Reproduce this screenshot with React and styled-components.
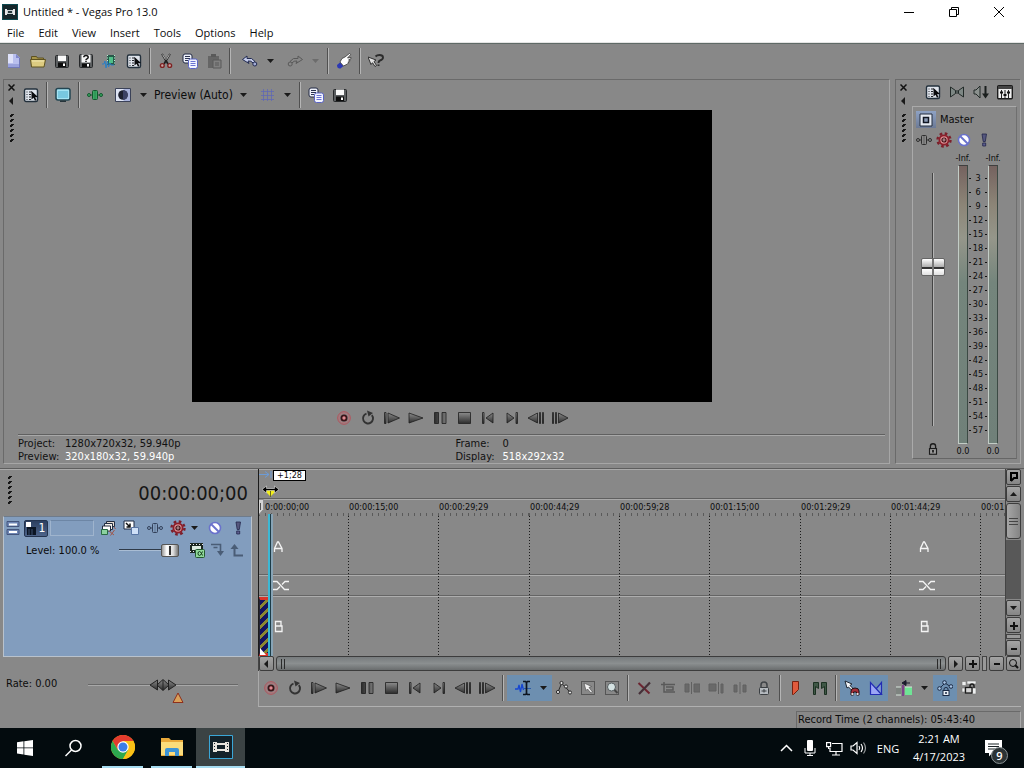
import { useState } from "react";
import styled, { createGlobalStyle, css } from "styled-components";

const UI_FONT = `"DejaVu Sans Condensed", "Noto Sans", sans-serif`;
const SYSTEM_FONT = `"Open Sans", "Noto Sans", sans-serif`;

const GlobalStyle = createGlobalStyle`
  * {
    box-sizing: border-box;
  }
  body {
    margin: 0;
    background: #888888;
    color: #0c0c0c;
    font-family: ${UI_FONT};
    font-size: 11px;
    line-height: 13px;
    overflow: hidden;
  }
  button, select, input {
    margin: 0;
    padding: 0;
    border: 0;
    background: none;
    color: inherit;
    font: inherit;
  }
  svg {
    display: block;
    flex: none;
  }
`;

const Page = styled.div`
  display: flex;
  flex-direction: column;
  min-height: 100vh;
`;

/* ---------- window frame ---------- */

const TitleBar = styled.header`
  display: flex;
  align-items: center;
  height: 23px;
  padding: 0 3px 0 2px;
  background: #fff;
  font-family: ${SYSTEM_FONT};
`;

const Title = styled.h1`
  flex: 1;
  margin: 0 0 0 5px;
  font-size: 11px;
  font-weight: 400;
  line-height: 16px;
`;

const WindowButton = styled.button`
  display: flex;
  align-items: center;
  justify-content: center;
  width: 45px;
  height: 22px;
`;

const MenuBar = styled.nav`
  display: flex;
  height: 20px;
  background: #fff;
  border-bottom: 1px solid #e4e4e4;
`;

const MenuItem = styled.button`
  padding: 0 7px;
  font-family: ${SYSTEM_FONT};
  font-size: 11px;
  line-height: 18px;
`;

/* ---------- toolbars ---------- */

const Bar = styled.div`
  display: flex;
  align-items: center;
`;

const MainToolbar = styled(Bar)`
  height: 36px;
  padding: 0 0 2px 2px;
  border-top: 1px solid #5f6a66;
`;

const Tool = styled.button`
  display: flex;
  align-items: center;
  justify-content: center;
  width: ${(p) => (p.$caret ? 17 : p.$small ? 20 : 24)}px;
  height: ${(p) => (p.$small ? 18 : 26)}px;
  opacity: ${(p) => (p.$dim ? 0.45 : 1)};
  background: ${(p) => (p.$on ? "#6d8fb0" : "none")};
`;

const DropTool = styled.div`
  display: flex;
  margin-left: ${(p) => (p.$on ? 0 : 4)}px;
  padding-left: ${(p) => (p.$on ? 4 : 0)}px;
  background: ${(p) => (p.$on ? "#6d8fb0" : "none")};
`;

const Separator = styled.div`
  width: 2px;
  height: 26px;
  margin: 0 3px;
  border-left: 1px solid #505050;
  border-right: 1px solid #b5b5b5;
`;

/* ---------- upper dock ---------- */

const Dock = styled.main`
  display: flex;
  flex: 1;
  gap: 5px;
  padding: 0 3px;
`;

const Panel = styled.section`
  display: flex;
  border: 1px solid #a6a6a6;
  border-top-color: #6a6a6a;
  border-left-color: #6a6a6a;
`;

const PreviewPanel = styled(Panel)`
  flex: 1;
`;

const MasterPanel = styled(Panel)`
  width: 126px;
`;

const GripColumn = styled.div`
  display: flex;
  flex-direction: column;
  align-items: center;
  width: 15px;
  padding-top: 1px;
`;

const GripButton = styled.button`
  display: flex;
  align-items: center;
  justify-content: center;
  width: 12px;
  height: 13px;
`;

const GripSpace = styled.span`
  height: 6px;
`;

const PreviewBody = styled.div`
  display: flex;
  flex: 1;
  flex-direction: column;
  padding-right: 4px;
`;

const PreviewToolbar = styled(Bar)`
  height: 30px;
`;

const SelectBox = styled.label`
  display: grid;
  align-items: center;
  width: 103px;
`;

const Select = styled.select`
  grid-area: 1 / 1;
  width: 100%;
  padding-left: 2px;
  appearance: none;
  font-size: 12px;
  line-height: 18px;
`;

const SelectCaret = styled.span`
  grid-area: 1 / 1;
  justify-self: end;
  padding-right: 7px;
  pointer-events: none;
`;

const VideoArea = styled.div`
  display: flex;
  flex: 1;
  justify-content: center;
`;

const Video = styled.div`
  aspect-ratio: 16 / 9;
  background: #000;
`;

const Transport = styled(Bar)`
  justify-content: center;
  height: 32px;
`;

const Readout = styled.div`
  display: grid;
  grid-template-columns: 1fr 1fr;
  column-gap: 8px;
  margin-left: -1px;
  padding-top: 2px;
  border-top: 1px solid #606060;
  box-shadow: inset 0 1px 0 #a8a8a8;
`;

const ReadoutList = styled.dl`
  display: grid;
  grid-template-columns: 47px 1fr;
  margin: 0;
`;

const Key = styled.dt`
  color: #111;
`;

const Value = styled.dd`
  margin: 0;
  color: ${(p) => (p.$light ? "#fff" : "#111")};
`;

/* ---------- master bus ---------- */

const MasterBody = styled.div`
  display: flex;
  flex: 1;
  flex-direction: column;
  padding: 0 3px 4px 0;
`;

const MasterTools = styled(Bar)`
  justify-content: flex-end;
  height: 26px;
  padding-bottom: 2px;
`;

const Strip = styled.div`
  display: flex;
  flex: 1;
  flex-direction: column;
  margin-left: 1px;
  padding: 3px 3px 0;
  border: 1px solid #aaaaaa;
  border-bottom-color: #666;
  border-right-color: #6f6f6f;
`;

const StripName = styled.div`
  display: flex;
  align-items: center;
  gap: 4px;
  height: 19px;
`;

const StripButton = styled.button`
  display: flex;
  align-items: center;
  justify-content: center;
  width: 20px;
  height: 17px;
  background: linear-gradient(#8ea2c4, #6c7a96);
`;

const StripTools = styled.div`
  display: flex;
  align-items: center;
  height: 22px;
  margin-left: -2px;
`;

const Mixer = styled.div`
  display: grid;
  flex: 1;
  grid-template-columns: 34px 1fr;
`;

const FaderColumn = styled.div`
  display: flex;
  flex-direction: column;
  align-items: center;
  padding: 22px 0 2px;
`;

const Fader = styled.input`
  flex: 1;
  width: 24px;
  height: 100px;
  margin-bottom: 16px;
  appearance: none;
  writing-mode: vertical-lr;
  direction: rtl;
  background: linear-gradient(90deg, #444 1px, #b4b4b4 1px) center / 2px 100% no-repeat;

  &::-webkit-slider-thumb {
    appearance: none;
    width: 24px;
    height: 18px;
    border: 1px solid #666;
    border-radius: 2px;
    background:
      linear-gradient(#777, #777) center / 2px 100% no-repeat,
      linear-gradient(#fff, #b0b0b0 48%, #333 50%, #333 60%, #fff 62%, #e0e0e0);
  }
`;

const Meters = styled.div`
  display: grid;
  grid-template-columns: 10px 20px 10px;
  grid-template-rows: 14px 1fr 14px;
  justify-items: center;
  justify-content: start;
  padding-left: 8px;
  font-size: 9px;
  line-height: 14px;
  white-space: nowrap;
`;

const Meter = styled.div`
  width: 10px;
  border: 1px solid #c2ccc6;
  border-right-color: #3c4a44;
  border-top-color: #3f3f3f;
  background: linear-gradient(#75625f, #8c8577 14%, #95968a 26%, #74857c 42%, #708079);
`;

const Scale = styled.ol`
  display: flex;
  flex-direction: column;
  justify-content: space-between;
  margin: 0;
  padding: 6px 0 7px;
  list-style: none;
  text-align: center;
`;

const ScaleMark = styled.li`
  display: flex;
  align-items: center;
  justify-content: space-between;
  width: 18px;

  &::before,
  &::after {
    content: "";
    width: 2px;
    height: 1px;
    background: #111;
  }
`;

/* ---------- timeline ---------- */

const Timeline = styled.section`
  display: grid;
  grid-template-columns: 258px minmax(0, 1fr);
  margin-top: 4px;
  padding-right: 3px;
  border-top: 1px solid #5e5e5e;
`;

const TrackSide = styled.div`
  display: flex;
  flex-direction: column;
  border-top: 1px solid #aaaaaa;
`;

const TimeBox = styled.div`
  display: flex;
  align-items: flex-start;
  justify-content: space-between;
  height: 46px;
  padding: 5px 10px 0 7px;
`;

const TimeDisplay = styled.output`
  padding-top: 5px;
  font-size: 20px;
  line-height: 26px;
  color: #161616;
`;

const TrackHeader = styled.div`
  height: 141px;
  margin: 0 6px 0 3px;
  padding: 1px;
  border: 1px solid #b9c2cc;
  border-top-color: #6e7b8b;
  background: #829dbe;
`;

const TrackRow = styled.div`
  display: flex;
  align-items: center;
  height: 20px;
`;

const TrackName = styled.input`
  width: 44px;
  height: 16px;
  margin: 0 2px;
  border: 1px solid #9fb4cd;
  border-top-color: #6d86a5;
`;

const TrackNumber = styled.button`
  display: flex;
  align-items: center;
  justify-content: space-between;
  width: 25px;
  height: 17px;
  margin-left: 3px;
  padding: 0 2px 0 1px;
  border: 1px solid #24344f;
  border-radius: 2px;
  background: linear-gradient(#2c3f60, #4d648a);
  color: #fff;
  font-size: 12px;
`;

const LevelRow = styled(TrackRow)`
  height: 24px;
  padding-left: 21px;
`;

const LevelLabel = styled.label`
  display: flex;
  align-items: center;
  gap: 20px;
  margin-right: 8px;
  white-space: nowrap;
`;

const LevelSlider = styled.input`
  width: 60px;
  height: 16px;
  appearance: none;
  background: linear-gradient(#2f3a48 1px, #a9bdd4 1px) center / 100% 2px no-repeat;

  &::-webkit-slider-thumb {
    appearance: none;
    width: 18px;
    height: 13px;
    border: 1px solid #555;
    border-radius: 2px;
    background:
      linear-gradient(#333, #333) center / 2px 9px no-repeat,
      linear-gradient(90deg, #999, #fff 30%, #ddd 70%, #777);
  }
`;

const RateRow = styled.div`
  display: flex;
  align-items: flex-start;
  justify-content: space-between;
  padding: 20px 20px 0 6px;
`;

const RateControl = styled.span`
  display: grid;
  justify-items: center;
  align-items: center;
  width: 150px;
`;

const RateSlider = styled.input`
  grid-area: 1 / 1;
  width: 100%;
  height: 15px;
  appearance: none;
  background: linear-gradient(#686868 1px, #a8a8a8 1px) center / 100% 2px no-repeat;

  &::-webkit-slider-thumb {
    appearance: none;
    width: 28px;
    height: 14px;
    background: none;
  }
`;

const RateThumb = styled.span`
  grid-area: 1 / 1;
  pointer-events: none;
`;

const RatePeak = styled.span`
  padding-left: 30px;
`;

const ArrangeSide = styled.div`
  display: grid;
  grid-template-columns: minmax(0, 1fr) 16px;
`;

const Arrange = styled.div`
  display: flex;
  flex-direction: column;
  border-left: 1px solid #1b1b1b;
  overflow: hidden;
`;

const MarkerBar = styled.div`
  position: relative;
  height: 30px;
  border-top: 1px solid #aaa;
  border-bottom: 1px solid #5f5f5f;
`;

const DragTip = styled.span`
  position: absolute;
  top: 0;
  left: 14px;
  padding: 0 3px;
  border: 1px solid #000;
  background: #fff;
  font-size: 9px;
  line-height: 9px;
`;

const LoopArrow = styled.span`
  position: absolute;
  top: 0;
  left: 0;
`;

const DragCursor = styled.span`
  position: absolute;
  top: 15px;
  left: 3px;
`;

const beatWidths = css`
  flex: none;
  width: 90px;

  &:nth-of-type(3n) {
    width: 91px;
  }
`;

const Ruler = styled.div`
  position: relative;
  display: flex;
  height: 17px;
  border-top: 1px solid #aaa;
`;

const RulerMark = styled.span`
  ${beatWidths}
  padding-left: 1px;
  font-size: 9px;
  line-height: 15px;
  background: repeating-linear-gradient(90deg, #5a5a5a 0 1px, transparent 1px 6px) left bottom / 100% 3px no-repeat;

  &:first-of-type {
    width: 89px;
    padding-left: 6px;
  }
`;

const StartFlag = styled.div`
  position: absolute;
  top: -1px;
  left: -1px;
`;

const Lanes = styled.div`
  position: relative;
`;

const Lane = styled.div`
  display: flex;
  height: ${(p) => p.$height}px;
  border-bottom: 1px solid #adadad;
  box-shadow: inset 0 -1px 0 #656565;
`;

const LastLane = styled(Lane)`
  border-bottom: 0;
  box-shadow: none;
`;

const Beat = styled.span`
  ${beatWidths}
  background: repeating-linear-gradient(#1a1a1a 0 1px, transparent 1px 3px) right top / 1px 100% no-repeat;
`;

const LaneMark = styled.span`
  position: absolute;
  left: ${(p) => p.$left}px;
  top: ${(p) => p.$top}px;
`;

const Clip = styled.div`
  position: absolute;
  left: 0;
  bottom: 0;
  width: 11px;
  height: 59px;
  border: 1px solid #223;
  border-top: 3px solid #d8342a;
  border-bottom: 3px solid #d8342a;
  background: repeating-linear-gradient(135deg, #14145e 0 4px, #8a8730 4px 7px);
`;

const ClipFade = styled.div`
  position: absolute;
  left: 1px;
  bottom: 1px;
`;

const Playhead = styled.div`
  position: absolute;
  top: -2px;
  bottom: 0;
  left: 9px;
  width: 5px;
  border-right: 2px solid #88a4b6;
  background: linear-gradient(90deg, #3cb8d4 2px, #1d3c48 2px);
`;

const ScrollColumn = styled.div`
  display: flex;
  flex-direction: column;
  gap: 1px;
  border-left: 1px solid #444;
`;

const ScrollButton = styled.button`
  display: flex;
  align-items: center;
  justify-content: center;
  width: 15px;
  height: ${(p) => (p.$row ? 15 : 16)}px;
  border: 1px solid #3c3c3c;
  border-radius: 2px;
  background: linear-gradient(#a4a4a4, #858585);
`;

const Trough = styled.div`
  flex: 1;
  background: #585858;
`;

const ScrollThumb = styled.div`
  display: flex;
  align-items: center;
  justify-content: center;
  height: 36px;
  border: 1px solid #3c3c3c;
  border-radius: 3px;
  background: linear-gradient(90deg, #a6a6a6, #848484);
`;

const ZoomSlot = styled.div`
  width: ${(p) => (p.$row ? 5 : 15)}px;
  height: ${(p) => (p.$row ? 15 : 5)}px;
  border: 1px solid #444;
  background: #999;
`;

const ScrollRow = styled.div`
  display: flex;
  grid-column: 1 / -1;
  gap: 2px;
  height: 15px;
  border-left: 1px solid #444;
`;

const WideThumb = styled.div`
  display: flex;
  flex: 1;
  align-items: center;
  justify-content: space-between;
  padding: 0 3px;
  border: 1px solid #3c3c3c;
  border-radius: 3px;
  background: linear-gradient(#777b7d, #8b8f90 50%, #6a6d6e);
`;

const EditBar = styled(Bar)`
  grid-column: 1 / -1;
  height: 36px;
  padding-bottom: 1px;
  border-left: 1px solid #aaa;
  border-bottom: 1px solid #b0b0b0;
`;

const Gap = styled.span`
  width: 5px;
`;

const StatusBar = styled.footer`
  display: flex;
  justify-content: flex-end;
  height: 21px;
  padding: 4px 3px 0 0;
`;

const StatusCell = styled.div`
  width: 225px;
  padding-left: 1px;
  border: 1px solid #6a6a6a;
  border-right-color: #aaa;
  border-bottom: 0;
  line-height: 15px;
`;

/* ---------- taskbar ---------- */

const Taskbar = styled.footer`
  display: flex;
  height: 40px;
  background: #030b0e;
  color: #fff;
  font-family: ${SYSTEM_FONT};
  font-size: 11px;
`;

const TaskButton = styled.button`
  display: flex;
  flex-direction: column;
  align-items: center;
  justify-content: center;
  width: 49px;
  background: ${(p) => (p.$active ? "#3b4344" : "none")};
`;

const TaskUnderline = styled.span`
  align-self: stretch;
  height: 2px;
  margin: ${(p) => (p.$full ? "0" : "0 4px")};
  background: #a6dcf0;
`;

const TaskIcon = styled.span`
  display: flex;
  flex: 1;
  align-items: center;
`;

const Tray = styled.div`
  display: flex;
  align-items: center;
  margin-left: auto;
`;

const TrayButton = styled.button`
  display: flex;
  align-items: center;
  justify-content: center;
  width: 24px;
  height: 40px;
`;

const Language = styled.button`
  width: 36px;
  height: 40px;
`;

const Clock = styled.button`
  width: 66px;
  height: 40px;
  line-height: 18px;
  text-align: center;
`;

const ActionCenter = styled.button`
  position: relative;
  display: flex;
  justify-content: center;
  align-items: center;
  width: 44px;
  height: 40px;
  margin-right: 8px;
`;

const Badge = styled.span`
  position: absolute;
  right: 8px;
  bottom: 4px;
  width: 17px;
  height: 17px;
  border: 1px solid #8a9294;
  border-radius: 50%;
  background: #2b3335;
  font-size: 11px;
  font-weight: 600;
  line-height: 15px;
`;

/* ---------- drawings ---------- */

const FloppyShape = () => (
  <>
    <rect x="1.500" y="2.500" width="13" height="12" rx="1" fill="#5b5e60" stroke="#26282a" />
    <path d="M4 2.500h8V8H4z" fill="#fafafa" />
    <path d="M4 9.500h8V14H4z" fill="#0c0c0c" />
    <path d="M9 10.500h2V13H9z" fill="#fff" />
  </>
);

const EventFxShape = ({ fill = "#888", line = "#2e2e2e" }) => (
  <g stroke={line} fill={fill}>
    <path d="M3 8h10" />
    <circle cx="2" cy="8" r="1.500" />
    <circle cx="14" cy="8" r="1.500" />
    <rect x="5.500" y="3.500" width="5" height="9" rx="1" />
    <path d="M8 4v8" opacity=".4" />
  </g>
);

const GearShape = () => (
  <>
    <circle cx="8" cy="8" r="6.500" fill="none" stroke="#7c1f2a" strokeWidth="2.400" strokeDasharray="2.600 2.500" />
    <circle cx="8" cy="8" r="4.600" fill="#dc8f94" stroke="#8c1f2b" strokeWidth="1.800" />
    <circle cx="8" cy="8" r="2" fill="#f6d6d6" stroke="#3a0a10" strokeWidth="1.200" />
    <circle cx="8" cy="8" r=".8" fill="#3a0a10" />
  </>
);

const CopyShape = () => (
  <>
    <rect x="1" y="1" width="9" height="9" rx="2" fill="#eef1fa" stroke="#222a44" />
    <path d="M3 3.500h5M3 5.500h5M3 7.500h3" stroke="#2b3350" />
    <rect x="6.500" y="6" width="9" height="9.500" rx="2" fill="#f3f5ff" stroke="#5a64c4" />
    <path d="M8.500 8.500h5M8.500 10.500h5M8.500 12.500h5" stroke="#6a74d4" />
  </>
);

const shapes = {
  vegas: (
    <>
      <path d="M0 0h16v16H0z" fill="#0d4a50" />
      <path d="M1 1h14v14H1z" fill="#16272b" />
      <path d="M3 5h2v6H3zM11 5h2v6h-2z" fill="#e8e8e8" />
      <path d="M5 6h6v4H5z" fill="#c9d2d4" />
      <path d="M6 7h4v2H6z" fill="#26383b" />
    </>
  ),
  newFile: (
    <>
      <path d="M2 1h8l4 4v10H2z" fill="#b9bfee" />
      <path d="M2 1h5v9H2z" fill="#dfe2fa" />
      <path d="M10 1v4h4z" fill="#8188cc" />
      <path d="M2 11h12v4H2z" fill="#9aa2dc" />
      <path d="M13.500 5v10M2 14.500h12" stroke="#7279b8" />
    </>
  ),
  open: (
    <>
      <path d="M1.500 13.500v-10h5l1 1.500h6v2.500" fill="#a8964a" stroke="#5e5220" />
      <path d="M.5 6.500h15l-1.500 7.500H1.500z" fill="#dccb80" stroke="#5e5220" />
      <path d="M2 8h12" stroke="#f0e6b0" />
    </>
  ),
  save: <FloppyShape />,
  saveAs: (
    <>
      <rect x="1.500" y="1.500" width="13" height="13" rx="1" fill="#5b5e60" stroke="#26282a" />
      <path d="M3.500 1.500h9v8h-9z" fill="#f6f6f6" />
      <path d="M5.800 4.300q0-1.800 2.200-1.800t2.200 1.800q0 1-1.200 1.600-1 .5-1 1.200M8 7.800v1.200" fill="none" stroke="#111" strokeWidth="1.500" />
      <path d="M4 10.500h8V14H4z" fill="#0c0c0c" />
      <path d="M9 11h2v2.500H9z" fill="#fff" />
    </>
  ),
  render: (
    <>
      <path d="M5 2h8v10H5z" fill="#27594a" />
      <path d="M7 4h4v6H7z" fill="#4fc088" />
      <path d="M5.500 2v9M12.500 2v10" stroke="#b8ecd0" strokeDasharray="1 1.500" />
      <path d="M0 11h2l1-3 1 7 1.500-7 1 6 1.500-4 1 2h3" fill="none" stroke="#2c7fc4" />
    </>
  ),
  props: (
    <>
      <rect x="1.500" y="2" width="13" height="12.500" rx="1.500" fill="#dfe4ec" stroke="#23303c" strokeWidth="1.400" />
      <path d="M3.500 5h1M3.500 7.500h1M3.500 10h1M3.500 12.500h1M6 5h3M6 7.500h2M6 10h2M6 12.500h2" stroke="#23252b" />
      <path d="M8.500 4v8.500l2-1.700 1.500 3 1.500-.8-1.400-2.700 2.900-.3z" fill="#0a0b0e" />
    </>
  ),
  cut: (
    <>
      <path d="M4 1l6 10M12 1L6 11" stroke="#202020" strokeWidth="1.800" />
      <path d="M4.500 1.500l3 5M11.500 1.500l-3 5" stroke="#e4e4e4" strokeWidth=".8" />
      <circle cx="4.300" cy="12.500" r="1.900" fill="#c9a6a6" stroke="#7d2222" strokeWidth="1.400" />
      <circle cx="11.700" cy="12.500" r="1.900" fill="#c9a6a6" stroke="#7d2222" strokeWidth="1.400" />
    </>
  ),
  copy: <CopyShape />,
  paste: (
    <>
      <path d="M2 3h11v12H2z" fill="#3c3c3c" />
      <path d="M5 1h5v3H5z" fill="#222" />
      <path d="M7 7h8v8H7z" fill="#777" stroke="#222" />
      <path d="M9 10h4M9 12h4" stroke="#222" />
    </>
  ),
  undo: (
    <>
      <path d="M.5 6.500L5 3v2.500q5-1.500 8 3l-1.800 1.500Q9 7.500 6 8l1 2.500z" fill="#c3cbea" stroke="#222b52" />
      <circle cx="12.800" cy="11" r="2" fill="#a3acd4" stroke="#222b52" />
    </>
  ),
  redo: (
    <>
      <path d="M15.500 6.500L11 3v2.500q-5-1.500-8 3l1.800 1.500Q7 7.500 10 8l-1 2.500z" fill="#888" stroke="#222" />
      <circle cx="3.200" cy="11" r="2" fill="#888" stroke="#222" />
    </>
  ),
  touch: (
    <>
      <path d="M1 12l3-2.500 3.500 3.500-3 2.500q-3.500.5-3.500-3.500z" fill="#2c38b4" />
      <path d="M4 9l2-3.500 3-1.500L13.500.5l1.200 1L11.500 5l3.500-.5v1.200L12.500 7l1.500.5-.5 1.200-1.500.2.500 1.100-1 1-4 2z" fill="#fff" stroke="#2a2a2a" strokeWidth=".7" />
    </>
  ),
  help: (
    <>
      <path d="M0 4l8 3-2 1.500 2.500 4L7 13.500 4.500 9.700 3 11.500z" fill="#e2e2e2" stroke="#222" strokeWidth=".9" />
      <path d="M7.500 3.500Q9 2 11.500 2 15 2 15 4.500q0 2-3 3Q10.500 8 10.500 10M10.500 11.500v1.500" fill="none" stroke="#2c2c2c" strokeWidth="1.900" />
    </>
  ),
  monitor: (
    <>
      <rect x="1" y="1.500" width="14" height="11.500" rx="2" fill="#a5e4f4" stroke="#234552" strokeWidth="1.500" />
      <path d="M3 4h10v7H3z" fill="#78c8e0" />
      <path d="M5 13.500h6v1.500H5z" fill="#26343a" />
    </>
  ),
  greenFx: <EventFxShape fill="#3ba964" line="#14582e" />,
  splitView: (
    <>
      <path d="M.5 1.500h15v13H.5z" fill="#dfe5f4" stroke="#3b4258" />
      <path d="M8.500 2h6.500v12H8.500z" fill="#aab4dc" />
      <circle cx="8" cy="8" r="4.800" fill="#1e2130" />
      <path d="M8 3.200a4.800 4.800 0 0 1 0 9.600z" fill="#3b4164" />
    </>
  ),
  grid: <path d="M4.500 2v12M8.500 2v12M12.500 2v12M2 4.500h13M2 8.500h13M2 12.500h13" stroke="#6068b4" strokeWidth=".8" />,
  mixerDown: (
    <g fill="#7d8784" stroke="#222a28">
      <path d="M1.500 3l5 3.500v3L1.500 13zM14.500 3l-5 3.500v3l5 3.500z" />
      <path d="M6.500 7h3v2h-3z" />
    </g>
  ),
  dim: (
    <>
      <path d="M1 6h2l4-4v12L3 10H1z" fill="#8b918e" stroke="#232b29" />
      <path d="M12.500 2v8" stroke="#1b1f1e" strokeWidth="2" />
      <path d="M9 9.500h7l-3.500 5z" fill="#1b1f1e" />
    </>
  ),
  console: (
    <>
      <rect x=".7" y="1.700" width="14.600" height="13" rx="1" fill="#eeeeee" stroke="#1c1c1c" strokeWidth="1.400" />
      <path d="M1 2h14v3H1z" fill="#444" />
      <path d="M4.500 6v8M8 6v8M11.500 6v8" stroke="#222" />
      <path d="M3 8.500h3M6.500 11h3M10 8.500h3" stroke="#111" strokeWidth="2" />
    </>
  ),
  busFrame: (
    <>
      <path d="M2 2h12v12H2z" fill="#e6ebf3" stroke="#222c3c" />
      <path d="M5.500 5.500h5v5h-5z" fill="#8a9ab4" stroke="#101622" strokeWidth="1.500" />
    </>
  ),
  fx: <EventFxShape />,
  trackFx: <EventFxShape fill="#829dbe" line="#33415a" />,
  gear: <GearShape />,
  mute: (
    <>
      <circle cx="8" cy="8" r="5.500" fill="#fff" stroke="#6a72cc" strokeWidth="1.600" />
      <path d="M4 4l8 8" stroke="#6a72cc" strokeWidth="2" />
    </>
  ),
  solo: (
    <>
      <path d="M6 2h4.500L9.300 9.500H7.200z" fill="#55577e" stroke="#22244a" strokeWidth=".8" />
      <path d="M6.700 11h3v3h-3z" fill="#5d5f90" stroke="#22244a" strokeWidth=".8" />
    </>
  ),
  lock: (
    <>
      <path d="M5 8V5q0-3 3-3t3 3v3" fill="none" stroke="#1c1c1c" strokeWidth="1.500" />
      <rect x="4" y="7.500" width="8" height="6.500" fill="#9a9a9a" stroke="#1c1c1c" strokeWidth="1.300" />
      <path d="M8 9v3" stroke="#1c1c1c" strokeWidth="2" />
    </>
  ),
  record: (
    <>
      <circle cx="8" cy="8" r="6.300" fill="none" stroke="#b8505a" strokeWidth="1" />
      <circle cx="8" cy="8" r="4.800" fill="none" stroke="#c46a72" strokeWidth=".8" />
      <circle cx="8" cy="8" r="2.600" fill="#e08a90" stroke="#3a1418" strokeWidth="1.800" />
    </>
  ),
  loop: (
    <>
      <path d="M11.800 5.200a5 5 0 1 1-5.300-1.500" fill="none" stroke="#333" strokeWidth="1.900" />
      <path d="M7 .5l6 2.500-4.500 3.500z" fill="#333" />
    </>
  ),
  playStart: <path d="M.5 2.500H2v11H.5zM4 3l11.500 5L4 13z" fill="url(#metal)" stroke="#1e1e1e" strokeWidth=".8" />,
  play: <path d="M1 3l14 5-14 5z" fill="url(#metal)" stroke="#1e1e1e" strokeWidth=".8" />,
  pause: <path d="M2.500 2.500h4v11h-4zM10 2.500h4v11h-4z" fill="url(#metalSide)" stroke="#1e1e1e" strokeWidth=".8" />,
  stop: <path d="M2.500 2.500h12v11h-12z" fill="url(#metal)" stroke="#1e1e1e" strokeWidth=".8" />,
  goStart: <path d="M2.500 2.500h1.500v11H2.500zM13 3v10L6 8z" fill="url(#metal)" stroke="#1e1e1e" strokeWidth=".8" />,
  goEnd: <path d="M12 2.500h1.500v11H12zM3 3v10l7-5z" fill="url(#metal)" stroke="#1e1e1e" strokeWidth=".8" />,
  prevFrame: <path d="M9.500 3v10L0 8zM11.500 2.500h1v11h-1zM14.500 2.500h1v11h-1z" fill="url(#metal)" stroke="#1e1e1e" strokeWidth=".8" />,
  nextFrame: <path d="M6.500 3v10L16 8zM3.500 2.500h1v11h-1zM.5 2.500h1v11h-1z" fill="url(#metal)" stroke="#1e1e1e" strokeWidth=".8" />,
  editTool: (
    <>
      <path d="M0 9h3l1-4 1.500 7L7 4l1.500 6" fill="none" stroke="#1646d2" strokeWidth="1.300" />
      <path d="M9 8.500h7" stroke="#2c5aa8" />
      <path d="M8 1.500h2.500l1 1 1-1H15M8 14.500h2.500l1-1 1 1H15M11.500 2v12" fill="none" stroke="#0c1420" strokeWidth="1.700" />
    </>
  ),
  envelope: (
    <g fill="#e8e8e8" stroke="#2b2b2b">
      <path d="M2 12L5.500 3.500l4.500 4 4 5" fill="none" />
      <circle cx="2" cy="12" r="1.600" />
      <circle cx="5.500" cy="3" r="1.600" />
      <circle cx="10" cy="6.500" r="1.600" />
      <circle cx="14" cy="12.500" r="1.600" />
    </g>
  ),
  selectTool: (
    <>
      <path d="M1.500 1.500h13v13h-13z" fill="none" stroke="#222" strokeDasharray="1 1" />
      <path d="M4 3l7.500 3.500-2.500 1L12.500 12 11 13 7.500 9 6 10.500z" fill="#f2f2f2" stroke="#444" strokeWidth=".6" />
    </>
  ),
  zoomTool: (
    <>
      <path d="M1.500 1.500h13v13h-13z" fill="none" stroke="#222" strokeDasharray="1 1" />
      <circle cx="7.500" cy="7" r="4" fill="#d5e2e2" stroke="#555d60" />
      <path d="M10.500 10l3 3" stroke="#444" strokeWidth="2" />
    </>
  ),
  remove: (
    <>
      <path d="M2.500 3l11 10.500" stroke="#6c2430" strokeWidth="2" />
      <path d="M14 2.500L3 14" stroke="#453038" strokeWidth="2.200" />
    </>
  ),
  trim: <path d="M1 4.500h14M4 2v10h11M6 7h7v3H6" fill="none" stroke="#222" strokeWidth="1.500" />,
  trimStart: <path d="M7.500 2v12M1 4h4v8H1zM10 4h6v8h-6z" fill="#444" stroke="#333" />,
  split: <path d="M10.500 2v12M1 4h7v7H1zM13 4h2v9h-2z" fill="#444" stroke="#333" />,
  splitDim: <path d="M8 2v12M2 5h3v7H2zM11 5h3v7h-3z" fill="#444" stroke="#333" />,
  lockEvent: (
    <>
      <path d="M5 8V5q0-3 3-3t3 3v3" fill="none" stroke="#3f4347" strokeWidth="1.500" />
      <rect x="3.500" y="7.500" width="9" height="7" rx="1" fill="#b4b9be" stroke="#3a3e42" />
      <path d="M8 9v3.500M5.500 11h5" stroke="#3a3e42" />
    </>
  ),
  marker: <path d="M4.500 1.500h6v8l-5 5h-1z" fill="#e05a3c" stroke="#76210f" />,
  region: (
    <g fill="#3f5746" stroke="#1c3122">
      <path d="M1.500 2.500h5v6l-3-2v8h-2z" />
      <path d="M14.500 2.500h-5v6l3-2v8h2z" />
    </g>
  ),
  snap: (
    <>
      <path d="M1 1l7 3-2 1.500L9.500 9 8 10.500 4.500 7 3 8z" fill="#f3f6fa" stroke="#1e2733" />
      <path d="M7 15v-4q0-3 4-3t4 3v4h-2.500v-3h-3v3z" fill="#a52f38" stroke="#1f1114" />
      <path d="M7.500 13h2v2h-2zM12.500 13h2v2h-2z" fill="#ddd" />
    </>
  ),
  crossfade: (
    <>
      <path d="M2.500 14V3l10 11z" fill="#9ca6f6" />
      <path d="M13.500 14V3l-5 5.500z" fill="#7f9ad0" />
      <path d="M2.500 14.500V2.500l11 12zM13.500 14.500v-12L8 9" fill="none" stroke="#232cb4" strokeWidth="1.200" />
    </>
  ),
  ripple: (
    <>
      <path d="M10 .5L6 3l4 2.500zM9 3h5" fill="#1b1b2c" stroke="#1b1b2c" />
      <path d="M0 7h5v8H0z" fill="#7d837f" />
      <path d="M9 7h7v8H9z" fill="#6fe495" />
      <path d="M7 5v11" stroke="#7a2d8c" strokeWidth="1.500" />
      <path d="M0 7h5M9 7h7M0 15h5" stroke="#d8e4dc" />
    </>
  ),
  lockEnvelope: (
    <>
      <path d="M2 9l6-6 6 4" fill="none" stroke="#1b2a44" />
      <g fill="#a8c4e4" stroke="#1b2a44">
        <circle cx="2.500" cy="8.500" r="1.800" />
        <circle cx="7.500" cy="2.500" r="1.800" />
        <circle cx="14" cy="6.500" r="1.800" />
        <path d="M7 10.500V9q0-1.500 2-1.500T11 9v1.500" fill="none" />
        <rect x="6" y="10.500" width="6" height="5" fill="#e8eef6" />
      </g>
      <path d="M9 12v2" stroke="#1b2a44" strokeWidth="1.500" />
    </>
  ),
  ignoreGroup: (
    <>
      <path d="M1 1.500h4v4H1zM6 1h9v3H6zM1 8h3v4H1zM11 8h4v6h-4z" fill="#eef0f0" stroke="#7a7a7a" strokeWidth=".6" />
      <rect x="4.500" y="7.500" width="6.500" height="5.500" fill="#d5d5d5" stroke="#1b1b1b" strokeWidth="1.300" />
      <path d="M9 7.500V6q0-2 2-2t2 2v2" fill="none" stroke="#1b1b1b" strokeWidth="1.400" />
    </>
  ),
  motion: (
    <>
      <g stroke="#222c3f">
        <path d="M6.500 1.500h8v5h-8z" fill="#e7dcd2" />
        <path d="M4.500 3.500h8v6h-8z" fill="#f6f2ee" />
        <path d="M2.500 6h8v5h-8z" fill="#fff" />
        <path d="M1.500 9.500h6v5h-6z" fill="#8bd29f" stroke="#2a6b44" />
      </g>
      <path d="M9 11l5 4M14.500 10l-4 5.500M14 7l1.500 2" stroke="#a0574a" />
    </>
  ),
  panCrop: (
    <>
      <path d="M1 1h10v8H1z" fill="#fff" stroke="#1c2940" />
      <path d="M3 3l4 4M7 3.500V7H3.500" fill="none" stroke="#111" strokeWidth="1.500" />
      <path d="M8.500 7.500h7v7h-7z" fill="#cfe0f7" stroke="#5875a4" />
    </>
  ),
  composite: (
    <>
      <path d="M1 1h13v10H1z" fill="#1b2620" />
      <path d="M3 4h9v4H3z" fill="#dceadf" />
      <path d="M1 2.500h13M1 9.500h6" stroke="#eee" strokeDasharray="1 2" />
      <rect x="6.500" y="7.500" width="9" height="8" rx="1" fill="#8fd99a" stroke="#245a30" />
      <path d="M13.500 9.500q-1.500 4-3 4-1.500 0-1.500-2t1.500-2q1.500 0 3 4" fill="none" stroke="#153a1d" />
    </>
  ),
  makeParent: (
    <>
      <path d="M2 2.500h9.500V10M4.500 5.500h4" stroke="#4a5d76" strokeWidth="1.600" />
      <path d="M8 9h7l-3.500 5z" fill="#4a5d76" />
    </>
  ),
  makeChild: (
    <>
      <path d="M5.500 6v7.500H14" stroke="#4a5d76" strokeWidth="2" />
      <path d="M1.500 7L5.500 2l4 5z" fill="#4a5d76" />
    </>
  ),
};

function Icon({ name, size = 16 }) {
  return (
    <svg width={size} height={size} viewBox="0 0 16 16" fill="none" aria-hidden="true">
      {shapes[name]}
    </svg>
  );
}

function Arrow({ dir = "down", faded }) {
  const d = {
    down: "M1 2h7L4.500 6z",
    up: "M1 6h7L4.500 2z",
    left: "M6 0v8L2 4z",
    right: "M3 0v8l4-4z",
  }[dir];
  return (
    <svg width="9" height="8" viewBox="0 0 9 8" aria-hidden="true">
      <path d={d} fill={faded ? "#6c6c6c" : "#1a1a1a"} />
    </svg>
  );
}

function GripDots() {
  return (
    <svg width="6" height="30" viewBox="0 0 6 30" aria-hidden="true">
      {[0, 5, 10, 15, 20, 25].map((y) => (
        <path key={y} d={`M2 ${y + 1}h3v1H4v1H3v1H1V${y + 2}h1z`} fill="#161616" />
      ))}
    </svg>
  );
}

function PlusMinus({ minus }) {
  return (
    <svg width="9" height="9" viewBox="0 0 9 9" aria-hidden="true">
      <path d={minus ? "M2 4h6v2H2z" : "M1 4h3V1h2v3h3v2H6v3H4V6H1z"} fill="#111" />
    </svg>
  );
}

function ToolButtons({ items }) {
  return items.map(([name, label, dim]) => (
    <Tool key={name} aria-label={label} title={label} $dim={dim}>
      <Icon name={name} />
    </Tool>
  ));
}

function Grip() {
  return (
    <GripColumn>
      <GripButton aria-label="Close panel">
        <svg width="7" height="7" viewBox="0 0 7 7">
          <path d="M.5.500l6 6M6.500.500l-6 6" stroke="#111" strokeWidth="1.500" />
        </svg>
      </GripButton>
      <GripButton aria-label="Collapse panel">
        <Arrow dir="left" />
      </GripButton>
      <GripSpace />
      <GripDots />
    </GripColumn>
  );
}

/* ---------- data ---------- */

const menus = ["File", "Edit", "View", "Insert", "Tools", "Options", "Help"];

const fileTools = [
  ["newFile", "New"],
  ["open", "Open"],
  ["save", "Save"],
  ["saveAs", "Save As"],
  ["render", "Render As"],
  ["props", "Properties"],
];

const clipboardTools = [
  ["cut", "Cut"],
  ["copy", "Copy"],
  ["paste", "Paste", true],
];

const transportTools = [
  ["record", "Record"],
  ["loop", "Loop Playback"],
  ["playStart", "Play From Start"],
  ["play", "Play"],
  ["pause", "Pause"],
  ["stop", "Stop"],
  ["goStart", "Go to Start"],
  ["goEnd", "Go to End"],
  ["prevFrame", "Previous Frame"],
  ["nextFrame", "Next Frame"],
];

const editTools = [
  ["envelope", "Envelope Edit Tool"],
  ["selectTool", "Selection Edit Tool"],
  ["zoomTool", "Zoom Edit Tool"],
];

const eventTools = [
  ["remove", "Delete"],
  ["trim", "Trim", true],
  ["trimStart", "Trim Start", true],
  ["split", "Trim End", true],
  ["splitDim", "Split", true],
  ["lockEvent", "Lock Event"],
];

const rulerMarks = [
  "0:00:00;00",
  "00:00:15;00",
  "00:00:29;29",
  "00:00:44;29",
  "00:00:59;28",
  "00:01:15;00",
  "00:01:29;29",
  "00:01:44;29",
  "00:01:59;28",
];

const dbMarks = Array.from({ length: 19 }, (_, i) => (i + 1) * 3);

/* ---------- sections ---------- */

function WindowFrame() {
  return (
    <>
      <TitleBar>
        <Icon name="vegas" />
        <Title>Untitled * - Vegas Pro 13.0</Title>
        <WindowButton aria-label="Minimize">
          <svg width="12" height="12" viewBox="0 0 12 12">
            <path d="M1 6.500h10" stroke="#000" />
          </svg>
        </WindowButton>
        <WindowButton aria-label="Restore">
          <svg width="12" height="12" viewBox="0 0 12 12" fill="none" stroke="#000">
            <path d="M1.500 3.500h7v7h-7zM3.500 3V1.500h7v7H9" />
          </svg>
        </WindowButton>
        <WindowButton aria-label="Close">
          <svg width="12" height="12" viewBox="0 0 12 12">
            <path d="M1 1l10 10M11 1L1 11" stroke="#000" />
          </svg>
        </WindowButton>
      </TitleBar>
      <MenuBar>
        {menus.map((menu) => (
          <MenuItem key={menu}>{menu}</MenuItem>
        ))}
      </MenuBar>
    </>
  );
}

function TopToolbar() {
  return (
    <MainToolbar role="toolbar">
      <ToolButtons items={fileTools} />
      <Separator />
      <ToolButtons items={clipboardTools} />
      <Separator />
      <DropTool>
        <ToolButtons items={[["undo", "Undo"]]} />
        <Tool $caret aria-label="Undo history">
          <Arrow />
        </Tool>
      </DropTool>
      <DropTool>
        <ToolButtons items={[["redo", "Redo", true]]} />
        <Tool $caret aria-label="Redo history">
          <Arrow faded />
        </Tool>
      </DropTool>
      <Separator />
      <ToolButtons items={[["touch", "Interactive Tutorials"]]} />
      <Separator />
      <ToolButtons items={[["help", "What's This Help"]]} />
    </MainToolbar>
  );
}

function Preview() {
  return (
    <PreviewPanel>
      <Grip />
      <PreviewBody>
        <PreviewToolbar>
          <ToolButtons items={[["props", "Project Video Properties"]]} />
          <Separator />
          <ToolButtons items={[["monitor", "External Monitor"]]} />
          <Separator />
          <ToolButtons items={[["greenFx", "Video Output FX"]]} />
          <DropTool>
            <ToolButtons items={[["splitView", "Split Screen View"]]} />
            <Tool $caret aria-label="Split screen options">
              <Arrow />
            </Tool>
          </DropTool>
          <SelectBox>
            <Select aria-label="Preview quality" defaultValue="auto">
              <option value="auto">Preview (Auto)</option>
              <option value="full">Preview (Full)</option>
            </Select>
            <SelectCaret>
              <Arrow />
            </SelectCaret>
          </SelectBox>
          <ToolButtons items={[["grid", "Overlays"]]} />
          <Tool $caret aria-label="Overlay options">
            <Arrow />
          </Tool>
          <Separator />
          <ToolButtons
            items={[
              ["copy", "Copy Snapshot"],
              ["save", "Save Snapshot"],
            ]}
          />
        </PreviewToolbar>
        <VideoArea>
          <Video />
        </VideoArea>
        <Transport>
          <ToolButtons items={transportTools} />
        </Transport>
        <Readout>
          <ReadoutList>
            <Key>Project:</Key>
            <Value>1280x720x32, 59.940p</Value>
            <Key>Preview:</Key>
            <Value $light>320x180x32, 59.940p</Value>
          </ReadoutList>
          <ReadoutList>
            <Key>Frame:</Key>
            <Value>0</Value>
            <Key>Display:</Key>
            <Value $light>518x292x32</Value>
          </ReadoutList>
        </Readout>
      </PreviewBody>
    </PreviewPanel>
  );
}

function MasterBus() {
  const [gain, setGain] = useState(64);

  return (
    <MasterPanel>
      <Grip />
      <MasterBody>
        <MasterTools>
          <ToolButtons
            items={[
              ["props", "Project Audio Properties"],
              ["mixerDown", "Downmix Output"],
              ["dim", "Dim Output"],
              ["console", "Mixing Console"],
            ]}
          />
        </MasterTools>
        <Strip>
          <StripName>
            <StripButton aria-label="Master bus">
              <Icon name="busFrame" />
            </StripButton>
            Master
          </StripName>
          <StripTools>
            {["fx", "gear", "mute", "solo"].map((name) => (
              <Tool key={name} $small aria-label={`Master ${name}`}>
                <Icon name={name} />
              </Tool>
            ))}
          </StripTools>
          <Mixer>
            <FaderColumn>
              <Fader
                type="range"
                aria-label="Master gain"
                value={gain}
                onChange={(e) => setGain(e.target.value)}
              />
              <Icon name="lock" size={14} />
            </FaderColumn>
            <Meters>
              <span>-Inf.</span>
              <span />
              <span>-Inf.</span>
              <Meter />
              <Scale>
                {dbMarks.map((db) => (
                  <ScaleMark key={db}>{db}</ScaleMark>
                ))}
              </Scale>
              <Meter />
              <span>0.0</span>
              <span />
              <span>0.0</span>
            </Meters>
          </Mixer>
        </Strip>
      </MasterBody>
    </MasterPanel>
  );
}

function TrackList() {
  return (
    <TrackSide>
      <TimeBox>
        <GripDots />
        <TimeDisplay>00:00:00;00</TimeDisplay>
      </TimeBox>
      <TrackHeader>
        <TrackRow>
          <svg width="16" height="16" viewBox="0 0 16 16" aria-hidden="true">
            <path d="M2 1.500h12v5H2zM2 9.500h12v5H2z" fill="#6f86b4" stroke="#44557c" />
            <path d="M4 4.500h8M4 12h8" stroke="#fff" strokeWidth="2" />
          </svg>
          <TrackNumber aria-label="Video track 1">
            <svg width="11" height="13" viewBox="0 0 11 13" aria-hidden="true">
              <path d="M0 0h5v5H0z" fill="#fff" />
              <path d="M1 5h9v8H1z" fill="#0b1524" />
              <path d="M3 7v6M6 7v6" stroke="#3c506e" />
            </svg>
            1
          </TrackNumber>
          <TrackName aria-label="Track name" />
          <ToolButtons
            items={[
              ["motion", "Bypass Motion Blur"],
              ["panCrop", "Track Motion"],
              ["trackFx", "Track FX"],
              ["gear", "Automation Settings"],
            ]}
          />
          <Arrow />
          <Gap />
          <ToolButtons
            items={[
              ["mute", "Mute"],
              ["solo", "Solo"],
            ]}
          />
        </TrackRow>
        <LevelRow>
          <LevelLabel>
            Level: 100.0 %
            <LevelSlider type="range" defaultValue="100" />
          </LevelLabel>
          {["composite", "makeParent", "makeChild"].map((name) => (
            <Tool key={name} $small aria-label={name}>
              <Icon name={name} />
            </Tool>
          ))}
        </LevelRow>
      </TrackHeader>
      <RateRow>
        <label htmlFor="rate">Rate: 0.00</label>
        <RateControl>
          <RateSlider id="rate" type="range" min="-20" max="20" defaultValue="0" />
          <RateThumb>
            <svg width="28" height="12" viewBox="0 0 28 12" fill="url(#metal)" stroke="#222" aria-hidden="true">
              <path d="M8.500 1v10L1 6zM19.500 1v10L27 6zM14 .5L20 6l-6 5.500L8 6zM14 1v10" />
            </svg>
          </RateThumb>
          <RatePeak>
            <svg width="12" height="11" viewBox="0 0 12 11" aria-hidden="true">
              <path d="M6 1l5 9.500H1z" fill="#d9a15a" stroke="#8e2f1c" />
            </svg>
          </RatePeak>
        </RateControl>
      </RateRow>
    </TrackSide>
  );
}

function LaneGlyph({ kind }) {
  const paths = {
    a: "M1.500 12V8.500l3-6.500h1l3.500 6.500V12M2 8.500h7",
    b: "M2.500 1.500H8V6H2.500h6.500v5.500H2.500z",
    x: "M0 2.500h4L11.500 10.500h4.500M0 10.500h4L7 7.500M9 5.500l3-3h4",
  };
  return (
    <svg width="17" height="13" viewBox="0 0 17 13" fill="none" stroke="#f4f4f4" aria-hidden="true">
      <path d={paths[kind]} strokeWidth="1.300" />
    </svg>
  );
}

function Beats() {
  return rulerMarks.map((mark) => <Beat key={mark} />);
}

function TrackView() {
  return (
    <ArrangeSide>
      <Arrange>
        <MarkerBar>
          <LoopArrow>
            <svg width="13" height="9" viewBox="0 0 13 9" fill="none" stroke="#6c9bd6" aria-hidden="true">
              <path d="M0 4.500h10M6 1.500l4 3-4 3M12 1v7" />
            </svg>
          </LoopArrow>
          <DragTip>+1;28</DragTip>
          <DragCursor>
            <svg width="17" height="12" viewBox="0 0 17 12" aria-hidden="true">
              <path d="M3 5h11v1l-5 5H8L3 6z" fill="#f2ee1c" />
              <path d="M8.500 6v6" stroke="#6b6a1c" />
              <path d="M0 4.500L4.500 1v2.500h8V1L17 4.500 12.500 8V5.500h-8V8z" fill="#000" stroke="#fff" strokeWidth=".5" />
            </svg>
          </DragCursor>
        </MarkerBar>
        <Ruler>
          {rulerMarks.map((mark) => (
            <RulerMark key={mark}>{mark}</RulerMark>
          ))}
          <StartFlag>
            <svg width="6" height="17" viewBox="0 0 6 17" aria-hidden="true">
              <path d="M0 .5h5.500v10L0 16.500z" fill="#d4d4d4" stroke="#8c8c8c" />
              <path d="M2.500 4v7" stroke="#555" />
            </svg>
          </StartFlag>
        </Ruler>
        <Lanes>
          <Lane $height={60}>
            <Beats />
          </Lane>
          <Lane $height={21}>
            <Beats />
          </Lane>
          <LastLane $height={59}>
            <Beats />
          </LastLane>
          <Clip />
          <ClipFade>
            <svg width="7" height="7" viewBox="0 0 7 7" aria-hidden="true">
              <path d="M0 0l6 7H0z" fill="#fff" />
            </svg>
          </ClipFade>
          <Playhead />
          {[14, 660].map((left) => (
            <div key={left}>
              <LaneMark $left={left} $top={24}>
                <LaneGlyph kind="a" />
              </LaneMark>
              <LaneMark $left={left} $top={63}>
                <LaneGlyph kind="x" />
              </LaneMark>
              <LaneMark $left={left} $top={104}>
                <LaneGlyph kind="b" />
              </LaneMark>
            </div>
          ))}
        </Lanes>
      </Arrange>
      <ScrollColumn>
        <ScrollButton aria-label="Marker tool">
          <svg width="10" height="10" viewBox="0 0 10 10">
            <path d="M2 9V1h6v5H5L2 9" fill="none" stroke="#000" strokeWidth="2" />
          </svg>
        </ScrollButton>
        <ScrollButton aria-label="Scroll up">
          <Arrow dir="up" />
        </ScrollButton>
        <ScrollThumb>
          <svg width="9" height="8" viewBox="0 0 9 8" stroke="#444" aria-hidden="true">
            <path d="M0 1.500h9M0 4.500h9M0 7.500h9" />
          </svg>
        </ScrollThumb>
        <Trough />
        <ScrollButton aria-label="Scroll down">
          <Arrow />
        </ScrollButton>
        <ScrollButton aria-label="Zoom in track height">
          <PlusMinus />
        </ScrollButton>
        <ZoomSlot />
        <ScrollButton aria-label="Zoom out track height">
          <PlusMinus minus />
        </ScrollButton>
      </ScrollColumn>
      <ScrollRow>
        <ScrollButton $row aria-label="Scroll left">
          <Arrow dir="left" />
        </ScrollButton>
        <WideThumb>
          {[0, 1].map((end) => (
            <svg key={end} width="6" height="10" viewBox="0 0 6 10" stroke="#2a2a2a" aria-hidden="true">
              <path d="M1.500 0v10M4.500 0v10" />
            </svg>
          ))}
        </WideThumb>
        <ScrollButton $row aria-label="Scroll right">
          <Arrow dir="right" />
        </ScrollButton>
        <ScrollButton $row aria-label="Zoom in time">
          <PlusMinus />
        </ScrollButton>
        <ZoomSlot $row />
        <ScrollButton $row aria-label="Zoom out time">
          <PlusMinus minus />
        </ScrollButton>
        <ScrollButton $row aria-label="Zoom tool">
          <svg width="11" height="11" viewBox="0 0 11 11" fill="none" stroke="#111">
            <circle cx="5" cy="5" r="3.500" />
            <path d="M7 7l3 3" strokeWidth="2" />
          </svg>
        </ScrollButton>
      </ScrollRow>
      <EditBar role="toolbar">
        <ToolButtons items={transportTools} />
        <Separator />
        <DropTool $on>
          <ToolButtons items={[["editTool", "Normal Edit Tool"]]} />
          <Tool $caret aria-label="Edit tools">
            <Arrow />
          </Tool>
        </DropTool>
        <ToolButtons items={editTools} />
        <Separator />
        <ToolButtons items={eventTools} />
        <Separator />
        <ToolButtons
          items={[
            ["marker", "Insert Marker"],
            ["region", "Insert Region"],
          ]}
        />
        <Separator />
        <Tool $on aria-label="Enable Snapping">
          <Icon name="snap" />
        </Tool>
        <Tool $on aria-label="Automatic Crossfades">
          <Icon name="crossfade" />
        </Tool>
        <DropTool>
          <ToolButtons items={[["ripple", "Auto Ripple"]]} />
          <Tool $caret aria-label="Ripple options">
            <Arrow />
          </Tool>
        </DropTool>
        <Tool $on aria-label="Lock Envelopes to Events">
          <Icon name="lockEnvelope" />
        </Tool>
        <ToolButtons items={[["ignoreGroup", "Ignore Event Grouping"]]} />
      </EditBar>
    </ArrangeSide>
  );
}

function WindowsTaskbar() {
  return (
    <Taskbar>
      <TaskButton aria-label="Start">
        <svg width="16" height="16" viewBox="0 0 16 16" fill="#fff">
          <path d="M0 2.200l6.500-.9v6.200H0zM7.300 1.200L16 0v7.500H7.300zM0 8.300h6.500v6.200L0 13.600zM7.300 8.300H16V16l-8.700-1.300z" />
        </svg>
      </TaskButton>
      <TaskButton aria-label="Search">
        <svg width="18" height="18" viewBox="0 0 18 18" fill="none" stroke="#fff" strokeWidth="1.500">
          <circle cx="10.500" cy="7" r="5.500" />
          <path d="M6.500 11l-6 6" />
        </svg>
      </TaskButton>
      <TaskButton aria-label="Chrome">
        <TaskIcon>
          <svg width="24" height="24" viewBox="0 0 24 24">
            <circle cx="12" cy="12" r="12" fill="#fbc116" />
            <path d="M12 6h10.400A12 12 0 0 0 1.600 6L6.800 15z" fill="#e33b2e" />
            <path d="M1.600 6A12 12 0 0 0 12 24l5.200-9H6.800z" fill="#2da94f" />
            <path d="M22.400 6A12 12 0 0 1 12 24l5.200-9L17 8l-5-2z" fill="#fbc116" />
            <circle cx="12" cy="12" r="5.700" fill="#fff" />
            <circle cx="12" cy="12" r="4.500" fill="#3b7de8" />
          </svg>
        </TaskIcon>
        <TaskUnderline />
      </TaskButton>
      <TaskButton aria-label="File Explorer">
        <TaskIcon>
          <svg width="22" height="20" viewBox="0 0 22 20">
            <path d="M0 1h8l2 2h12v16H0z" fill="#e9a93a" />
            <path d="M0 5h22v13H0z" fill="#fbdc7b" />
            <path d="M4 19v-6q0-2 2-2h10q2 0 2 2v6h-4v-4H8v4z" fill="#3d94d6" />
          </svg>
        </TaskIcon>
        <TaskUnderline />
      </TaskButton>
      <TaskButton $active aria-label="Vegas Pro">
        <TaskIcon>
          <svg width="24" height="24" viewBox="0 0 24 24">
            <path d="M.5.500h23v23H.5z" fill="#14222a" stroke="#3aa7d8" />
            <path d="M4 7h4v10H4zM16 7h4v10h-4z" fill="#e8e4de" />
            <path d="M5 8h1v1H5zM5 11h1v1H5zM5 14h1v1H5zM18 8h1v1h-1zM18 11h1v1h-1zM18 14h1v1h-1z" fill="#14222a" />
            <path d="M8 9h8M8 15h8" stroke="#e8e4de" strokeWidth="2" />
          </svg>
        </TaskIcon>
        <TaskUnderline $full />
      </TaskButton>
      <Tray>
        <TrayButton aria-label="Show hidden icons">
          <svg width="13" height="8" viewBox="0 0 13 8" fill="none" stroke="#fff" strokeWidth="1.500">
            <path d="M1 7l5.500-5.500L12 7" />
          </svg>
        </TrayButton>
        <TrayButton aria-label="Microphone">
          <svg width="12" height="16" viewBox="0 0 12 16" fill="#fff">
            <rect x="3" y="0" width="6" height="11" rx="1" />
            <path d="M1 8v5h10V8M6 13v2.500M3 15.500h6" fill="none" stroke="#fff" />
          </svg>
        </TrayButton>
        <TrayButton aria-label="Network">
          <svg width="17" height="15" viewBox="0 0 17 15" fill="none" stroke="#fff" strokeWidth="1.200">
            <path d="M6 2.500h10v8H4V7M10 10.500V14M6 14h8M.6 1.600h4v4h-4zM2.600 5.500V8" />
          </svg>
        </TrayButton>
        <TrayButton aria-label="Volume">
          <svg width="17" height="14" viewBox="0 0 17 14" fill="none" stroke="#fff" strokeWidth="1.200">
            <path d="M1 5h2l4-3.500v11L3 9H1zM9 5q1.500 2 0 4M11 3q3 4 0 8" />
            <path d="M13.500 1.500q4 5.500 0 11" opacity=".6" />
          </svg>
        </TrayButton>
        <Language>ENG</Language>
        <Clock>
          2:21 AM
          <br />
          4/17/2023
        </Clock>
        <ActionCenter aria-label="Notifications">
          <svg width="18" height="17" viewBox="0 0 18 17">
            <path d="M0 0h17v13H7l-3 3.500V13H0z" fill="#fff" />
            <path d="M3 4h11M3 6.500h11M3 9h7" stroke="#1b2427" />
          </svg>
          <Badge>9</Badge>
        </ActionCenter>
      </Tray>
    </Taskbar>
  );
}

function Gradients() {
  return (
    <svg width="0" height="0" aria-hidden="true">
      <defs>
        <linearGradient id="metal" x1="0" y1="0" x2="0" y2="1">
          <stop offset="0" stopColor="#8c8c8c" />
          <stop offset="1" stopColor="#2c2c2c" />
        </linearGradient>
        <linearGradient id="metalSide" x1="0" y1="0" x2="1" y2="0">
          <stop offset="0" stopColor="#2c2c2c" />
          <stop offset="1" stopColor="#777" />
        </linearGradient>
      </defs>
    </svg>
  );
}

function App() {
  return (
    <Page>
      <GlobalStyle />
      <Gradients />
      <WindowFrame />
      <TopToolbar />
      <Dock>
        <Preview />
        <MasterBus />
      </Dock>
      <Timeline>
        <TrackList />
        <TrackView />
      </Timeline>
      <StatusBar>
        <StatusCell>Record Time (2 channels): 05:43:40</StatusCell>
      </StatusBar>
      <WindowsTaskbar />
    </Page>
  );
}

export default App;
